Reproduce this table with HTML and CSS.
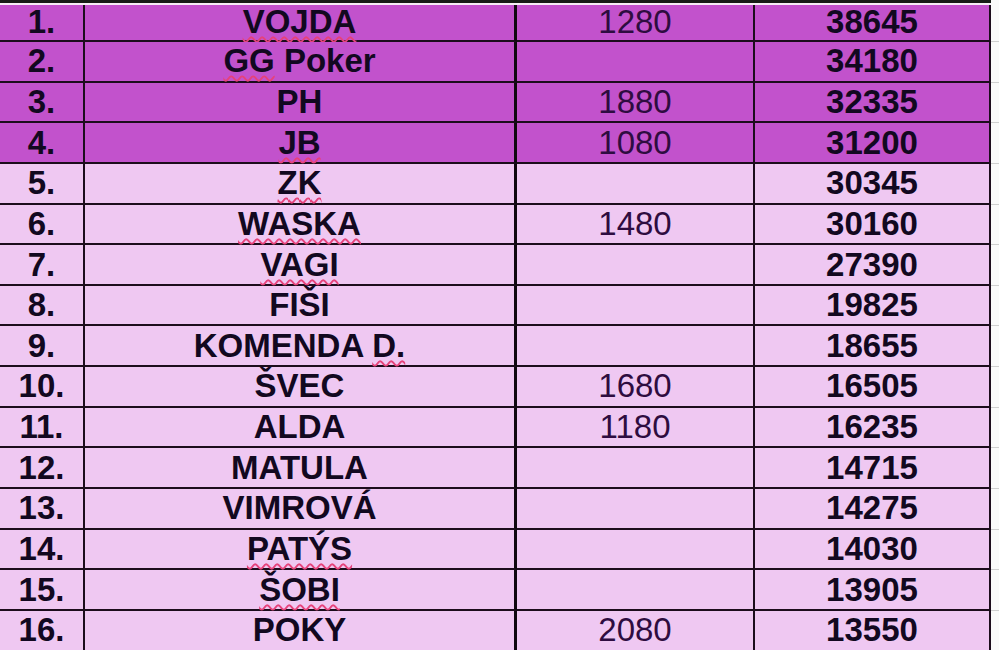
FILE: index.html
```html
<!DOCTYPE html>
<html>
<head>
<meta charset="utf-8">
<link rel="stylesheet" href="styles.css">
</head>
<body>
<div class="sheet">
  <div class="topline"><div class="dark"></div><div class="light"></div></div>
  <div class="row hi first"><div class="c rank">1.</div><div class="c name"><span><span class="sp">VOJDA</span></span></div><div class="c pts">1280</div><div class="c tot">38645</div><div class="fill"></div></div>
  <div class="row hi"><div class="c rank">2.</div><div class="c name"><span><span class="sp">GG</span> Poker</span></div><div class="c pts"></div><div class="c tot">34180</div><div class="fill"></div></div>
  <div class="row hi"><div class="c rank">3.</div><div class="c name"><span>PH</span></div><div class="c pts">1880</div><div class="c tot">32335</div><div class="fill"></div></div>
  <div class="row hi"><div class="c rank">4.</div><div class="c name"><span><span class="sp">JB</span></span></div><div class="c pts">1080</div><div class="c tot">31200</div><div class="fill"></div></div>
  <div class="row"><div class="c rank">5.</div><div class="c name"><span><span class="sp">ZK</span></span></div><div class="c pts"></div><div class="c tot">30345</div><div class="fill"></div></div>
  <div class="row"><div class="c rank">6.</div><div class="c name"><span><span class="sp">WASKA</span></span></div><div class="c pts">1480</div><div class="c tot">30160</div><div class="fill"></div></div>
  <div class="row"><div class="c rank">7.</div><div class="c name"><span><span class="sp">VAGI</span></span></div><div class="c pts"></div><div class="c tot">27390</div><div class="fill"></div></div>
  <div class="row"><div class="c rank">8.</div><div class="c name"><span>FIŠI</span></div><div class="c pts"></div><div class="c tot">19825</div><div class="fill"></div></div>
  <div class="row"><div class="c rank">9.</div><div class="c name"><span>KOMENDA <span class="sp">D.</span></span></div><div class="c pts"></div><div class="c tot">18655</div><div class="fill"></div></div>
  <div class="row"><div class="c rank">10.</div><div class="c name"><span>ŠVEC</span></div><div class="c pts">1680</div><div class="c tot">16505</div><div class="fill"></div></div>
  <div class="row"><div class="c rank">11.</div><div class="c name"><span>ALDA</span></div><div class="c pts">1180</div><div class="c tot">16235</div><div class="fill"></div></div>
  <div class="row"><div class="c rank">12.</div><div class="c name"><span>MATULA</span></div><div class="c pts"></div><div class="c tot">14715</div><div class="fill"></div></div>
  <div class="row"><div class="c rank">13.</div><div class="c name"><span>VIMROVÁ</span></div><div class="c pts"></div><div class="c tot">14275</div><div class="fill"></div></div>
  <div class="row"><div class="c rank">14.</div><div class="c name"><span><span class="sp">PATÝS</span></span></div><div class="c pts"></div><div class="c tot">14030</div><div class="fill"></div></div>
  <div class="row"><div class="c rank">15.</div><div class="c name"><span><span class="sp">ŠOBI</span></span></div><div class="c pts"></div><div class="c tot">13905</div><div class="fill"></div></div>
  <div class="row"><div class="c rank">16.</div><div class="c name"><span>POKY</span></div><div class="c pts">2080</div><div class="c tot">13550</div><div class="fill"></div></div>
</div>
</body>
</html>
```
FILE: styles.css
```css
html, body {
  margin: 0;
  padding: 0;
  background: #fafafa;
  overflow: hidden;
}
.sheet {
  width: 999px;
  height: 650px;
  overflow: hidden;
  font-family: "Liberation Sans", Arial, sans-serif;
  font-size: 33px;
  line-height: 36px;
  color: #120820;
}
.topline .dark {
  height: 3px;
  background: #161c16;
  width: 991px;
}
.topline .light {
  height: 2px;
  background: #f6eef6;
  width: 991px;
}
.row {
  display: grid;
  grid-template-columns: 85px 432px 238px 236px 1fr;
  grid-template-rows: minmax(0, 1fr);
  height: 40.65px;
}
.row.first {
  height: 37px;
}
.row.first .c {
  padding-bottom: 1px;
}
.c {
  box-sizing: border-box;
  min-height: 0;
  border-bottom: 2px solid #1c0c1c;
  border-right: 2px solid #1c0c1c;
  display: flex;
  align-items: center;
  justify-content: center;
  font-weight: bold;
  white-space: nowrap;
  background: #efc8f2;
}
.row.hi .c {
  background: #c252cc;
}
.c.name {
  border-right: 3px solid #100810;
}
.c.pts {
  font-weight: normal;
  color: #2e0c40;
}
.fill {
  box-sizing: border-box;
  border-bottom: 1px solid #cfcfcf;
  background: #fafafa;
}
.sp {
  text-decoration: underline wavy #e6427a;
  text-decoration-thickness: 1.5px;
  text-underline-offset: 3px;
  text-decoration-skip-ink: none;
}
```
